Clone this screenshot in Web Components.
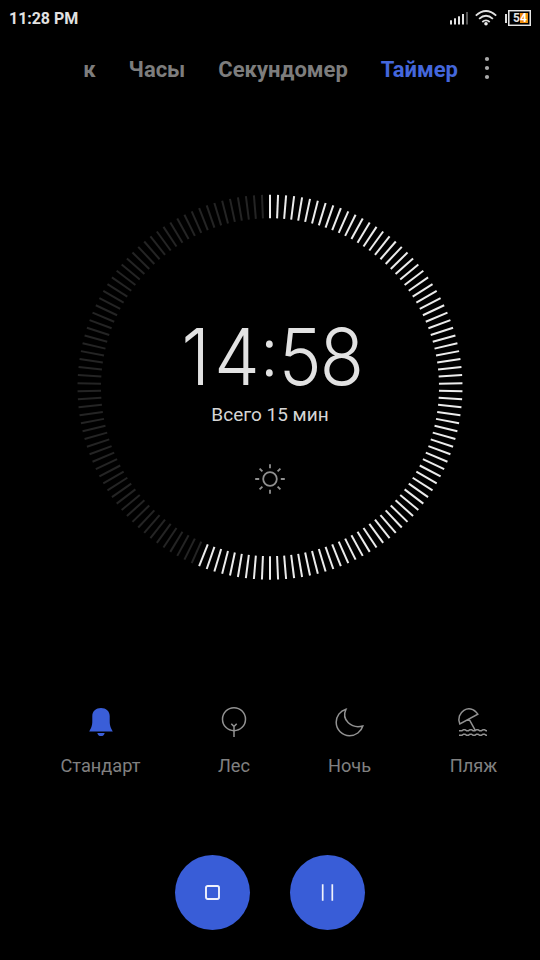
<!DOCTYPE html>
<html lang="ru">
<head>
<meta charset="utf-8">
<title>Таймер</title>
<style>
html,body{margin:0;background:#000;height:960px;overflow:hidden}
</style>
</head>
<body>
<timer-app></timer-app>
<script>
const define = (name, html, after) => customElements.define(name, class extends HTMLElement {
  connectedCallback() {
    if (this.shadowRoot) return;
    this.attachShadow({mode: 'open'}).innerHTML = html;
    if (after) after(this, this.shadowRoot);
  }
});

define('status-bar', `<style>
:host{display:flex;align-items:center;justify-content:space-between;height:36px;padding:0 9px;box-sizing:border-box;font:700 16px/36px Roboto,sans-serif;color:#e2e2e2}
.clock{padding-top:1px;letter-spacing:-.05px}
.icons{display:flex;align-items:center;height:36px}
svg{display:block}
.battery{display:flex;align-items:center;margin-left:8px}
.nub{width:2px;height:9px;background:#ddd;margin-right:1px}
.cell{display:flex;width:23px;height:16px;box-sizing:border-box;border:1px solid #e6e6e6;box-shadow:inset 0 0 0 .6px #ccc;padding:2px 2px 2px 4px;font:700 12px/11px Roboto,sans-serif}
.cell span{display:block;height:10px;line-height:11px}
.a{width:7px}.b{width:8px;background:#f08c0a;color:#fff;text-align:left}
</style>
<span class="clock">11:28 PM</span>
<div class="icons">
<svg width="18" height="14" viewBox="0 0 18 14"><g fill="#e2e2e2"><rect x="0" y="9.3" width="2" height="4.2"/><rect x="4" y="7.3" width="2" height="6.2"/><rect x="8" y="5.3" width="2" height="8.2"/><rect x="12" y="3" width="2" height="10.5"/></g><rect x="16" y="1" width="2" height="12.5" fill="#555"/></svg>
<svg style="margin-left:7px" width="22" height="16" viewBox="0 0 22 16"><g fill="none" stroke="#e2e2e2" stroke-width="1.8"><path d="M.8 5.6Q11-3.5 21.2 5.6M4.1 8.9Q11 2.7 17.9 8.9M7.3 12Q11 8.7 14.7 12"/></g><circle cx="11" cy="13.8" r="1.8" fill="#eee"/></svg>
<div class="battery"><i class="nub"></i><div class="cell"><span class="a">5</span><span class="b">4</span></div></div>
</div>`);

define('tab-bar', `<style>
:host{display:flex;height:66px;align-items:center;justify-content:flex-end;padding-right:50px;padding-top:1px;box-sizing:border-box;font:700 22px/30px Roboto,sans-serif;color:#7d7d7d;gap:33px}
svg{width:6px;height:24px;margin-left:-7px;margin-top:-3px}
</style><slot></slot><svg viewBox="0 0 6 24"><g fill="#aaa"><circle cx="3" cy="3" r="2.1"/><circle cx="3" cy="12" r="2.1"/><circle cx="3" cy="21" r="2.1"/></g></svg>`);

define('tab-item', `<style>:host{display:block;white-space:nowrap}:host([active]){color:#4467dc}</style><slot></slot>`);

define('timer-dial', `<style>
:host{display:grid;width:386px;height:386px;margin:92px auto 0}
svg,.face{grid-area:1/1}
.face{display:flex;flex-direction:column;align-items:center;padding-top:113px;font-family:Roboto,sans-serif}
.time{height:98px;font-family:Inter,Roboto,sans-serif;font-size:79px;line-height:98px;font-weight:300;color:#e2e2e2;transform:scaleX(.915);margin-left:6px;white-space:nowrap}
.one{letter-spacing:4.6px}
.colon{display:inline-block;width:21px;text-align:center;font:400 66px/20px Roboto,sans-serif;vertical-align:9.500px}
.five{letter-spacing:-2.2px}
.total{font-size:19px;line-height:24px;color:#d6d6d6;margin-top:-2px}
.sun{margin-top:36px}
</style>
<svg class="ring" width="386" height="386" viewBox="0 0 386 386"></svg>
<div class="face"><div class="time"><span class="one">1</span>4<span class="colon">:</span><span class="five">5</span>8</div><div class="total">Всего 15 мин</div>
<svg class="sun" width="32" height="32" viewBox="-16 -16 32 32" fill="none" stroke="#909090" stroke-width="1.8"><circle r="6.8"/><path d="M0-14.8v4M0 10.8v4M-14.8 0h4M10.8 0h4M-10.4-10.4l2.8 2.8M10.4-10.4l-2.8 2.8M-10.4 10.4l2.8-2.8M10.4 10.4l-2.8-2.8"/></svg></div>`,
(host, root) => {
  let s = '';
  for (let i = 0; i < 150; i++)
    s += `<path d="M193 .7v23.5" transform="rotate(${i * 2.4} 193 193.2)" stroke="${i <= 84 ? '#ececec' : '#242424'}" stroke-width="2"/>`;
  root.querySelector('.ring').innerHTML = s;
});

const icons = {
  bell: `<g fill="#3a5ed8" stroke="none" transform="translate(0 -.6)"><path d="M5.2 26C7.2 22.500 8.3 20.500 8.3 15.500V10.500C8.3 5.500 12 2.500 17 2.500S25.700 5.500 25.700 10.500V15.500C25.700 20.500 26.800 22.500 28.800 26Z"/><path d="M13.300 27.500H20.700C20 29.700 18.800 30.700 17 30.700S14 29.700 13.300 27.500Z"/></g>`,
  tree: `<circle cx="17" cy="13.200" r="11.500"/><path d="M17 31V20.500M17 20.500L14.300 17.700M17 20.500L19.700 17.700"/>`,
  moon: `<path d="M13 3.300C7 5 3.200 10.200 3.200 16.300C3.200 23.700 9.200 29.700 16.500 29.700C22.700 29.700 28.200 25.700 29.800 20C18.500 23 8 14 13 3.300Z"/>`,
  beach: `<path d="M4.300 17.600C-.5 6.500 14-4.500 22.300 7.800ZM13.700 13L19.500 23.500M3.500 24.300H6.500L8 23.300H9.500L11 24.300H13L14.500 23.300H16L17.500 24.300H19.500L21 23.300H22.500L24 24.300H26L27.500 23.300H29L30.500 24.300H31.500M3.500 28.800H6.500L8 27.800H9.500L11 28.800H13L14.500 27.800H16L17.500 28.800H19.500L21 27.800H22.500L24 28.800H26L27.500 27.800H29L30.500 28.800H31.500" transform="translate(-1.500 .4)"/>`
};
define('sound-option', `<style>
:host{display:flex;flex-direction:column;align-items:center;font:400 18.2px/24px Roboto,sans-serif;color:#808080}
svg{width:34px;height:34px;margin-bottom:14px}
</style><svg viewBox="0 0 34 34" fill="none" stroke="#929292" stroke-width="1.500"></svg><span><slot></slot></span>`,
(host, root) => { root.querySelector('svg').innerHTML = icons[host.getAttribute('icon')]; });

define('round-button', `<style>
:host{display:grid;place-items:center;width:75px;height:75px;border-radius:50%;background:#395dd7}
</style><svg width="19" height="19" viewBox="0 0 19 19" fill="none" stroke="#f0f2fc"></svg>`,
(host, root) => {
  root.querySelector('svg').innerHTML = host.getAttribute('action') === 'stop'
    ? '<rect x="3" y="3" width="13" height="13" rx="1.700" stroke-width="1.900"/>'
    : '<path d="M4.700 1.300V17.700M14.300 1.300V17.700" stroke-width="1.700"/>';
});

define('timer-app', `<style>
:host{display:block;width:540px;height:960px;background:#000;overflow:hidden}
.sounds{display:flex;padding-left:61px;margin-top:126px}
.sounds>*{flex:none}
.s1{width:79px}.s2{width:32px;margin-left:78px}.s3{width:43px;margin-left:78px}.s4{width:47px;margin-left:79px}
.actions{display:flex;gap:40px;justify-content:center;margin-top:77px}
</style>
<status-bar></status-bar>
<tab-bar><tab-item>к</tab-item><tab-item>Часы</tab-item><tab-item>Секундомер</tab-item><tab-item active>Таймер</tab-item></tab-bar>
<timer-dial></timer-dial>
<div class="sounds"><sound-option class="s1" icon="bell">Стандарт</sound-option><sound-option class="s2" icon="tree">Лес</sound-option><sound-option class="s3" icon="moon">Ночь</sound-option><sound-option class="s4" icon="beach">Пляж</sound-option></div>
<div class="actions"><round-button action="stop"></round-button><round-button action="pause"></round-button></div>`);
</script>
</body>
</html>
